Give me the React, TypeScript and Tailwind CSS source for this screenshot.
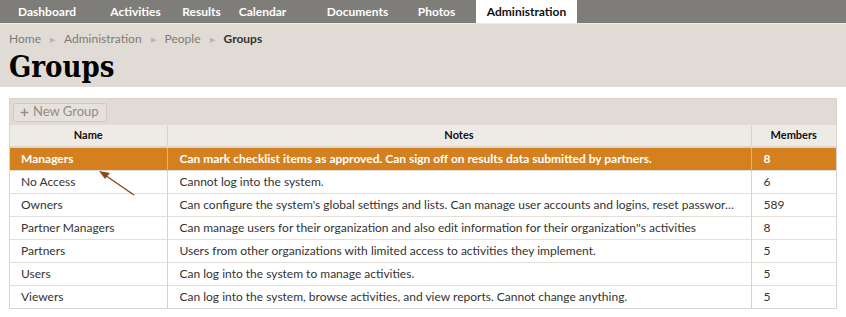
import { Plus } from 'lucide-react'

// tab widths picked so the labels sit where the reference has them
const TABS = [
  { label: 'Dashboard', w: 'w-[76px]' },
  { label: 'Activities', w: 'w-[101px]' },
  { label: 'Results', w: 'w-[31px]' },
  { label: 'Calendar', w: 'w-[91px]' },
  { label: 'Documents', w: 'w-[99px]' },
  { label: 'Photos', w: 'w-[59px]' },
]

const GROUPS = [
  { name: 'Managers', notes: 'Can mark checklist items as approved. Can sign off on results data submitted by partners.', members: 8 },
  { name: 'No Access', notes: 'Cannot log into the system.', members: 6 },
  {
    name: 'Owners',
    notes:
      "Can configure the system's global settings and lists. Can manage user accounts and logins, reset passwords and assign roles to users across all organizations.",
    members: 589,
  },
  { name: 'Partner Managers', notes: "Can manage users for their organization and also edit information for their organization''s activities", members: 8 },
  { name: 'Partners', notes: 'Users from other organizations with limited access to activities they implement.', members: 5 },
  { name: 'Users', notes: 'Can log into the system to manage activities.', members: 5 },
  { name: 'Viewers', notes: 'Can log into the system, browse activities, and view reports. Cannot change anything.', members: 5 },
]

const font = { fontFamily: '"Lato", "Open Sans", sans-serif' }

export default function App() {
  const selected = 'Managers'
  return (
    <div className="relative h-[317px] w-[846px] bg-white text-[12px] text-[#333]" style={font}>
      {/* top nav */}
      <div className="flex h-[23px] bg-[#7f7d7a] pl-[9px]">
        {TABS.map((t) => (
          <div key={t.label} className={`flex h-[23px] items-center justify-center whitespace-nowrap font-bold text-white ${t.w}`}>
            {t.label}
          </div>
        ))}
        <div className="ml-[10px] flex h-[23px] w-[101px] items-center justify-center bg-white font-bold text-[#111]">
          Administration
        </div>
      </div>

      {/* header band */}
      <div className="h-[64px] border-t border-[#efece7] bg-[#e0dcd5] px-[9px]">
        <div className="flex items-center gap-[9px] pt-[6px] text-[#7d7b78]">
          <span>Home</span>
          <span className="text-[7px] text-[#b9b5ae]">▶</span>
          <span>Administration</span>
          <span className="text-[7px] text-[#b9b5ae]">▶</span>
          <span>People</span>
          <span className="text-[7px] text-[#b9b5ae]">▶</span>
          <span className="font-bold text-[#333]">Groups</span>
        </div>
        <h1
          className="mt-[2px] text-[29px] leading-[34px] font-bold text-black"
          style={{ fontFamily: '"DejaVu Serif Condensed", "DejaVu Serif", serif' }}
        >
          Groups
        </h1>
      </div>

      {/* grid */}
      <div className="mx-[9px] mt-[11px] border border-[#d9d4cb]">
        <div className="flex h-[26px] items-center bg-[#e0dcd5] px-[3px]">
          <button className="flex h-[19px] items-center gap-[3px] rounded-[3px] border border-[#cfcac1] bg-[#e6e2db] pr-[7px] pl-[5px] text-[13px] text-[#8f8c87]">
            <Plus size={11} strokeWidth={3} />
            New Group
          </button>
        </div>
        <table className="w-full table-fixed border-collapse">
          <colgroup>
            <col className="w-[157px]" />
            <col />
            <col className="w-[85px]" />
          </colgroup>
          <thead>
            <tr className="h-[22px] border-b-2 border-[#dcd6cc] bg-[#eeebe6] text-[11px] text-[#111]">
              <th className="border-r border-[#d9d4cb] font-bold">Name</th>
              <th className="border-r border-[#d9d4cb] font-bold">Notes</th>
              <th className="font-bold">Members</th>
            </tr>
          </thead>
          <tbody>
            {GROUPS.map((g) => {
              const sel = g.name === selected
              return (
                <tr
                  key={g.name}
                  className={`h-[23px] border-b border-[#e3ded6] last:border-b-0 ${
                    sel ? 'bg-[#d4801e] font-bold text-white' : 'bg-white text-[#333]'
                  }`}
                >
                  <td className={`border-r px-[11px] ${sel ? 'border-[#e3b47c]' : 'border-[#d9d4cb]'}`}>{g.name}</td>
                  <td className={`truncate border-r px-[12px] ${sel ? 'border-[#e3b47c]' : 'border-[#d9d4cb]'}`}>
                    {g.notes}
                  </td>
                  <td className="px-[12px]">{g.members}</td>
                </tr>
              )
            })}
          </tbody>
        </table>
      </div>

      {/* annotation arrow */}
      <svg className="absolute top-[168px] left-[96px]" width="42" height="30" viewBox="0 0 42 30">
        <line x1="38" y1="27" x2="6" y2="5" stroke="#8a4a16" strokeWidth="1.5" />
        <path d="M3 3 L14 5 L9 11 Z" fill="#8a4a16" />
      </svg>
    </div>
  )
}
